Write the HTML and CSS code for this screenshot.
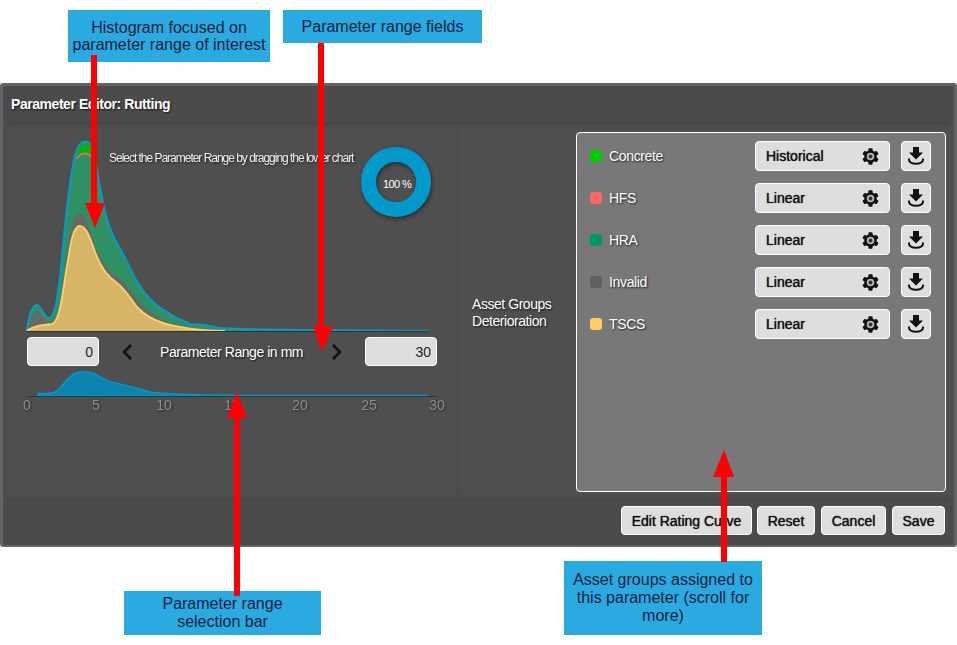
FILE: index.html
```html
<!DOCTYPE html>
<html lang="en">
<head>
<meta charset="utf-8">
<title>Parameter Editor</title>
<link rel="stylesheet" href="styles.css">
</head>
<body>
<svg class="defs" width="0" height="0" aria-hidden="true">
  <symbol id="gear" viewBox="0 0 18 18">
    <g fill="#111">
      <rect x="6.8" y="0.3" width="4.4" height="17.400" rx="1"/>
      <rect x="6.8" y="0.3" width="4.4" height="17.400" rx="1" transform="rotate(60 9 9)"/>
      <rect x="6.8" y="0.3" width="4.4" height="17.400" rx="1" transform="rotate(120 9 9)"/>
      <circle cx="9" cy="9" r="6.6"/>
    </g>
    <circle cx="9" cy="9" r="4" fill="#b5b5b5"/>
    <circle cx="9" cy="9" r="2" fill="#333"/>
  </symbol>
  <symbol id="download" viewBox="0 0 16 18">
    <path fill="#111" d="M5 0h6v5.500h4l-7 7L1 5.500h4z"/>
    <path fill="none" stroke="#111" stroke-width="2" d="M.8 11.500c0 3.700 2.800 5.300 7.200 5.300s7.200-1.600 7.200-5.300"/>
  </symbol>
</svg>

<main class="page">
  <section class="dialog">
    <header class="dialog-title">Parameter Editor: Rutting</header>
    <div class="dialog-body">
      <div class="chart-col">
        <svg class="chart-top" width="454" height="206" viewBox="3 126 454 206">
          <path fill="#2f9064" d="M27 331C29 316 32 305 37 305C41 305 43 318 49 318C55 318 58 300 61 270C65 225 71 165 77 150C80 141 87 140 91 144C95 150 99 190 106 216C111 235 118 245 127 262C135 280 145 300 168 313C175 318 185 322 192 325C200 324 205 325 218 328C230 330 280 330 427 331Z"/>
          <path fill="#0fae0f" d="M74 160C76 150 80 142 85 142C90 142 92 148 94 160Z"/>
          <path fill="#2f9064" d="M74 160C78 155 81 154 85 154C89 154 92 156 94 160V170H74Z"/>
          <path fill="none" stroke="#ff6666" stroke-width="1.600" d="M76.500 159C79 155 82 153.500 85 153.500C88 153.500 90.500 155 92 158"/>
          <path fill="#646866" d="M27 331C31 320 33 311 37 311C41 311 44 322 50 322C58 322 61 300 65 270C68 245 72 218 78 214C84 212 88 224 93 240C98 255 104 268 116 276C124 282 130 290 137 299C147 312 162 322 182 327L205 331Z"/>
          <path fill="#d6b566" d="M27 331C33 326 42 325 52 324C59 322 62 300 66 272C70 250 72 228 79 226C86 225 90 238 95 252C100 266 106 276 117 283C124 288 130 298 137 307C146 317 160 324 180 327C195 330 210 331 225 331Z"/>
          <path fill="none" stroke="#0a98bc" stroke-width="2.400" d="M27 331C29 316 32 305 37 305C41 305 43 318 49 318C55 318 58 300 61 270C65 225 71 165 77 150C80 141 87 140 91 144C95 150 99 190 106 216C111 235 118 245 127 262C135 280 145 300 168 313C175 318 185 322 192 325C200 324 205 325 218 328C230 330 280 330 427 331"/>
          <path fill="none" stroke="#ffcc66" stroke-width="2" d="M27 331C33 326 42 325 52 324C59 322 62 300 66 272C70 250 72 228 79 226C86 225 90 238 95 252C100 266 106 276 117 283C124 288 130 298 137 307C146 317 160 324 180 327C195 330 210 331 225 331"/>
          <path fill="none" stroke="#303030" d="M27 331.500H427"/>
          <text class="hint" x="109" y="162">Select the Parameter Range by dragging the lower chart</text>
          <circle class="donut" cx="396" cy="182" r="27.5"/>
          <text class="donut-label" x="397" y="188">100 %</text>
        </svg>

        <div class="range-row">
          <input class="range-input" type="text" value="0" aria-label="Range minimum">
          <svg class="chevron chev-left" width="12" height="18" viewBox="0 0 12 18"><path d="M10 2L3 9l7 7"/></svg>
          <span class="range-label">Parameter Range in mm</span>
          <svg class="chevron chev-right" width="12" height="18" viewBox="0 0 12 18"><path d="M2 2l7 7-7 7"/></svg>
          <input class="range-input" type="text" value="30" aria-label="Range maximum">
        </div>

        <svg class="chart-bottom" width="454" height="48" viewBox="3 366 454 48">
          <path class="mini-area" d="M38 393.500C44 394 50 394.500 55 392C62 388 68 376 76 373C82 371 90 372 95 374C102 378 106 381 115 383C130 386 140 389 150 392C165 394.500 190 395 240 395.400L427 395.500V396H38Z"/>
          <path class="axis" d="M27 396.500H437"/>
          <text class="tick" x="27" y="410">0</text>
          <text class="tick" x="96" y="410">5</text>
          <text class="tick" x="164" y="410">10</text>
          <text class="tick" x="232" y="410">15</text>
          <text class="tick" x="300" y="410">20</text>
          <text class="tick" x="369" y="410">25</text>
          <text class="tick" x="437" y="410">30</text>
        </svg>
      </div>

      <div class="group-label">Asset Groups<br>Deterioration</div>

      <div class="asset-panel">
        <div class="asset-row">
          <span class="dot dot-concrete"></span><span class="asset-name">Concrete</span>
          <button class="curve-btn" type="button">Historical<svg class="gear" width="17" height="17"><use href="#gear"/></svg></button>
          <button class="dl-btn" type="button"><svg width="16" height="18"><use href="#download"/></svg></button>
        </div>
        <div class="asset-row">
          <span class="dot dot-hfs"></span><span class="asset-name">HFS</span>
          <button class="curve-btn" type="button">Linear<svg class="gear" width="17" height="17"><use href="#gear"/></svg></button>
          <button class="dl-btn" type="button"><svg width="16" height="18"><use href="#download"/></svg></button>
        </div>
        <div class="asset-row">
          <span class="dot dot-hra"></span><span class="asset-name">HRA</span>
          <button class="curve-btn" type="button">Linear<svg class="gear" width="17" height="17"><use href="#gear"/></svg></button>
          <button class="dl-btn" type="button"><svg width="16" height="18"><use href="#download"/></svg></button>
        </div>
        <div class="asset-row">
          <span class="dot dot-invalid"></span><span class="asset-name">Invalid</span>
          <button class="curve-btn" type="button">Linear<svg class="gear" width="17" height="17"><use href="#gear"/></svg></button>
          <button class="dl-btn" type="button"><svg width="16" height="18"><use href="#download"/></svg></button>
        </div>
        <div class="asset-row">
          <span class="dot dot-tscs"></span><span class="asset-name">TSCS</span>
          <button class="curve-btn" type="button">Linear<svg class="gear" width="17" height="17"><use href="#gear"/></svg></button>
          <button class="dl-btn" type="button"><svg width="16" height="18"><use href="#download"/></svg></button>
        </div>
      </div>
    </div>
    <footer class="dialog-footer">
      <button class="foot-btn btn-edit" type="button">Edit Rating Curve</button>
      <button class="foot-btn btn-reset" type="button">Reset</button>
      <button class="foot-btn btn-cancel" type="button">Cancel</button>
      <button class="foot-btn btn-save" type="button">Save</button>
    </footer>
  </section>
</main>

<div class="callout c-hist">Histogram focused on<br>parameter range of interest</div>
<div class="callout c-fields">Parameter range fields</div>
<div class="callout c-bar">Parameter range<br>selection bar</div>
<div class="callout c-groups">Asset groups assigned to<br>this parameter (scroll for<br>more)</div>

<svg class="arrows" width="957" height="645" viewBox="0 0 957 645" aria-hidden="true">
  <path d="M91 55h6v148h8L95 228 85 203h6z"/>
  <path d="M318 43h6v283h9L322 352 313 326h5z"/>
  <path d="M234 596h6V418h7L237 392l-10 26h7z"/>
  <path d="M721 562h6V477h7L724 450l-11 27h8z"/>
</svg>
</body>
</html>
```
FILE: styles.css
```css
* { box-sizing: border-box; }

html, body { margin: 0; padding: 0; }

body {
  position: relative;
  width: 957px;
  height: 645px;
  overflow: hidden;
  background: #fff;
  font-family: "Liberation Sans", Arial, sans-serif;
}

.defs { position: absolute; }

.page { padding-top: 83px; }

.dialog {
  height: 464px;
  display: flex;
  flex-direction: column;
  background: #4f4f4f;
  border-style: solid;
  border-color: #646464;
  border-width: 3px 3px 2px 3px;
  border-radius: 3px;
}

.dialog-title {
  flex: none;
  height: 36px;
  margin: 0 4px;
  padding: 11px 0 0 4px;
  font-size: 14px;
  line-height: 14px;
  font-weight: bold;
  letter-spacing: -0.45px;
  color: #fff;
  text-shadow: 1px 1px 2px rgba(0, 0, 0, .75);
  background: #4b4b4b;
  box-shadow: 0 2px 5px rgba(0, 0, 0, .18);
}

.dialog-body {
  flex: 1;
  min-height: 0;
  display: flex;
  padding-top: 4px;
}

.chart-col {
  flex: none;
  width: 455px;
  border-right: 1px solid #454545;
  height: 372px;
}

.chart-top, .chart-bottom { display: block; }

.hint {
  font-size: 12px;
  letter-spacing: -1.02px;
  fill: #eee;
  filter: drop-shadow(1px 1px 1px rgba(0, 0, 0, .6));
}

.donut {
  fill: none;
  stroke: #0099cc;
  stroke-width: 15;
  filter: drop-shadow(1px 2px 2px rgba(0, 0, 0, .45));
}

.donut-label {
  font-size: 11px;
  letter-spacing: -0.6px;
  text-anchor: middle;
  fill: #fff;
}

.range-row {
  width: 410px;
  height: 29px;
  margin: 5px 0 0 24px;
  display: flex;
  align-items: center;
}

.range-input {
  flex: none;
  width: 72px;
  height: 29px;
  padding: 0 5px;
  border: 1px solid #fff;
  border-radius: 4px;
  background: #ddd;
  color: #222;
  font: 14px "Liberation Sans", Arial, sans-serif;
  text-align: right;
}

.chevron {
  flex: none;
  fill: none;
  stroke: #111;
  stroke-width: 2.6;
}

.chev-left { margin: 0 27px 0 22px; }
.chev-right { margin: 0 22px 0 28px; }

.range-label {
  flex: 1;
  text-align: center;
  font-size: 14px;
  letter-spacing: -0.45px;
  color: #fff;
  white-space: nowrap;
  text-shadow: 1px 1px 2px rgba(0, 0, 0, .75);
}

.mini-area { fill: #0a84ad; stroke: #0099cc; stroke-width: 1.5; }

.axis { stroke: #333; fill: none; }

.tick {
  font-size: 14px;
  text-anchor: middle;
  fill: #8c8c8c;
  filter: drop-shadow(1px 1px 1px rgba(0, 0, 0, .5));
}

.group-label {
  flex: none;
  width: 118px;
  align-self: flex-start;
  margin-top: 170px;
  padding-left: 14px;
  font-size: 14px;
  line-height: 17px;
  letter-spacing: -0.45px;
  color: #fff;
  text-shadow: 1px 1px 2px rgba(0, 0, 0, .75);
}

.asset-panel {
  flex: none;
  width: 370px;
  height: 360px;
  margin-top: 6px;
  padding: 8px 14px 0 13px;
  display: flex;
  flex-direction: column;
  gap: 12px;
  background: #787878;
  border: 1px solid #fff;
  border-radius: 4px;
}

.asset-row {
  flex: none;
  height: 30px;
  display: flex;
  align-items: center;
}

.dot {
  flex: none;
  width: 12px;
  height: 12px;
  border-radius: 3px;
}

.dot-concrete { background: #00d000; }
.dot-hfs { background: #ff6666; }
.dot-hra { background: #009966; }
.dot-invalid { background: #606060; }
.dot-tscs { background: #ffcc66; }

.asset-name {
  flex: 1;
  margin-left: 7px;
  font-size: 14px;
  letter-spacing: -0.35px;
  color: #fff;
  text-shadow: 1px 1px 2px rgba(0, 0, 0, .75);
}

.curve-btn, .dl-btn, .foot-btn {
  font-family: "Liberation Sans", Arial, sans-serif;
  color: #111;
  background: #dedede;
  border: 1px solid #fff;
  border-radius: 4px;
  cursor: pointer;
}

.curve-btn {
  flex: none;
  width: 135px;
  height: 30px;
  padding: 0 10px;
  display: flex;
  align-items: center;
  justify-content: space-between;
  font-size: 14px;
  text-shadow: 0 0 1px rgba(0, 0, 0, .9);
}

.dl-btn {
  flex: none;
  width: 30px;
  height: 30px;
  margin-left: 11px;
  padding: 0;
  display: flex;
  align-items: center;
  justify-content: center;
}

.dialog-footer {
  flex: none;
  height: 44px;
  margin: 0 4px;
  padding: 5px 5px 0 0;
  display: flex;
  justify-content: flex-end;
  gap: 5px;
  background: #4b4b4b;
  box-shadow: 0 -2px 5px rgba(0, 0, 0, .18);
}

.foot-btn {
  height: 29px;
  padding: 0;
  font-size: 14px;
  text-shadow: 0 0 1px rgba(0, 0, 0, .9);
}

.btn-edit { width: 131px; }
.btn-reset { width: 58px; }
.btn-cancel { width: 65px; margin-left: 1px; }
.btn-save { width: 53px; margin-left: 1px; }

.callout {
  position: absolute;
  display: flex;
  align-items: center;
  justify-content: center;
  text-align: center;
  font-size: 16px;
  line-height: 18px;
  color: #0b1d3a;
  background: #29abe2;
}

.c-hist { left: 68px; top: 10px; width: 202px; height: 52px; line-height: 17px; }
.c-fields { left: 283px; top: 10px; width: 199px; height: 33px; }
.c-bar { left: 124px; top: 591px; width: 197px; height: 44px; }
.c-groups { left: 564px; top: 561px; width: 198px; height: 74px; }

.arrows { position: absolute; left: 0; top: 0; fill: #ff0000; pointer-events: none; }
```
